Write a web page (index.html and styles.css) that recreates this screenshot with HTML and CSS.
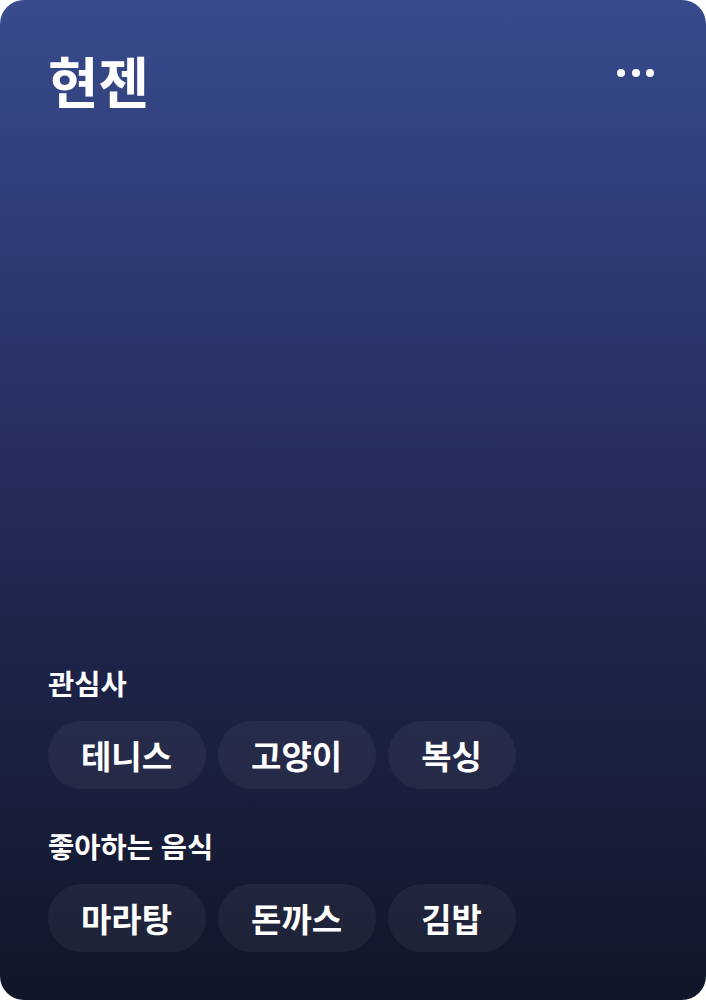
FILE: index.html
```html
<!DOCTYPE html>
<html lang="ko">
<head>
<meta charset="utf-8">
<link rel="stylesheet" href="styles.css">
</head>
<body>
<div class="card">
  <header class="card-head">
    <h1 class="name">현젠</h1>
    <button class="more" aria-label="더보기"><span></span><span></span><span></span></button>
  </header>
  <div class="sections">
    <section class="group">
      <h2 class="label">관심사</h2>
      <div class="chips">
        <span class="chip">테니스</span>
        <span class="chip">고양이</span>
        <span class="chip">복싱</span>
      </div>
    </section>
    <section class="group">
      <h2 class="label">좋아하는 음식</h2>
      <div class="chips">
        <span class="chip">마라탕</span>
        <span class="chip">돈까스</span>
        <span class="chip">김밥</span>
      </div>
    </section>
  </div>
</div>
</body>
</html>
```
FILE: styles.css
```css
* { box-sizing: border-box; }
html, body { margin: 0; padding: 0; background: #ffffff; }
body { font-family: "Noto Sans CJK KR", "Noto Sans", sans-serif; }
.card {
  width: 706px;
  height: 1000px;
  border-radius: 24px;
  background: linear-gradient(180deg, #384b8d 0%, #2a3469 35%, #1d2449 65%, #121629 100%);
  color: #ffffff;
  display: flex;
  flex-direction: column;
  justify-content: space-between;
  padding: 46px 48px 48px 48px;
}
.card-head {
  display: flex;
  justify-content: space-between;
  align-items: flex-start;
}
.name {
  margin: 0;
  font-size: 55px;
  font-weight: 700;
  line-height: 66px;
}
.more {
  background: none;
  border: 0;
  padding: 0;
  margin-top: 23px;
  margin-right: 4px;
  display: flex;
  gap: 6.5px;
}
.more span {
  width: 8px;
  height: 8px;
  border-radius: 50%;
  background: #ffffff;
}
.sections {
  display: flex;
  flex-direction: column;
  gap: 38px;
}
.group {
  display: flex;
  flex-direction: column;
  gap: 19px;
}
.label {
  margin: 0;
  font-size: 28.5px;
  font-weight: 700;
  line-height: 38px;
}
.chips {
  display: flex;
  gap: 12px;
}
.chip {
  height: 68px;
  padding: 0 34px 0 33px;
  border-radius: 34px;
  background: rgba(255, 255, 255, 0.05);
  font-size: 33px;
  font-weight: 700;
  display: inline-flex;
  align-items: center;
}
```
